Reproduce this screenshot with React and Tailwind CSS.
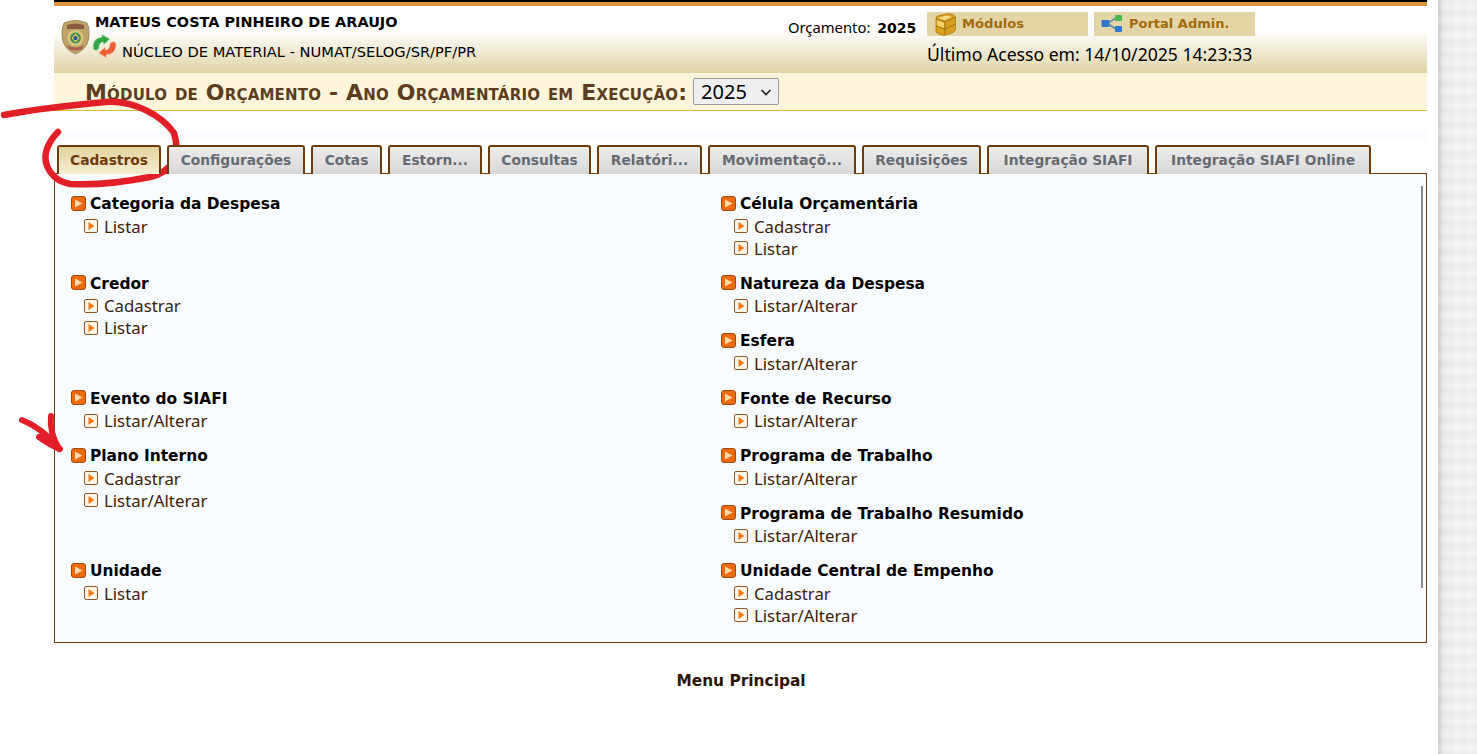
import React from 'react';

const tahoma = 'font-["Noto_Sans",sans-serif]';
const verdana = 'font-["DejaVu_Sans",sans-serif]';

const tabs = [
  { label: 'Cadastros', w: 'w-[104px]', active: true },
  { label: 'Configurações', w: 'w-[138px]' },
  { label: 'Cotas', w: 'w-[71px]' },
  { label: 'Estorn...', w: 'w-[94px]' },
  { label: 'Consultas', w: 'w-[103px]' },
  { label: 'Relatóri...', w: 'w-[105px]' },
  { label: 'Movimentaçõ...', w: 'w-[148px]' },
  { label: 'Requisições', w: 'w-[119px]' },
  { label: 'Integração SIAFI', w: 'w-[162px]' },
  { label: 'Integração SIAFI Online', w: 'w-[216px]' },
];

const leftCol = [
  { title: 'Categoria da Despesa', items: ['Listar'], h: 'h-[79.5px]' },
  { title: 'Credor', items: ['Cadastrar', 'Listar'], h: 'h-[115px]' },
  { title: 'Evento do SIAFI', items: ['Listar/Alterar'], h: 'h-[57.5px]' },
  { title: 'Plano Interno', items: ['Cadastrar', 'Listar/Alterar'], h: 'h-[115px]' },
  { title: 'Unidade', items: ['Listar'], h: 'h-[57.5px]' },
];

const rightCol = [
  { title: 'Célula Orçamentária', items: ['Cadastrar', 'Listar'], h: 'h-[79.5px]' },
  { title: 'Natureza da Despesa', items: ['Listar/Alterar'], h: 'h-[57.5px]' },
  { title: 'Esfera', items: ['Listar/Alterar'], h: 'h-[57.5px]' },
  { title: 'Fonte de Recurso', items: ['Listar/Alterar'], h: 'h-[57.5px]' },
  { title: 'Programa de Trabalho', items: ['Listar/Alterar'], h: 'h-[57.5px]' },
  { title: 'Programa de Trabalho Resumido', items: ['Listar/Alterar'], h: 'h-[57.5px]' },
  { title: 'Unidade Central de Empenho', items: ['Cadastrar', 'Listar/Alterar'], h: 'h-[79.5px]' },
];

const HeadBullet = () => (
  <svg width="15" height="15" viewBox="0 0 15 15" className="shrink-0 -mt-[3px]">
    <rect x="0.5" y="0.5" width="14" height="14" rx="2.5" fill="#ee6a0a" stroke="#9a4a12" />
    <path d="M4 3.5 L11.5 7.5 L4 11.5 Z" fill="#ffd9b0" />
  </svg>
);

const ItemBullet = () => (
  <svg width="14" height="14" viewBox="0 0 14 14" className="shrink-0 -mt-[3px]">
    <rect x="0.5" y="0.5" width="13" height="13" rx="1.5" fill="#fff6e8" stroke="#8f5a2c" />
    <path d="M4.5 3 L10.5 7 L4.5 11 Z" fill="#f57a14" />
  </svg>
);

const Emblem = () => (
  <svg width="29" height="36" viewBox="0 0 29 36" className="shrink-0">
    <path d="M3 4 Q14.5 -1 26 4 Q29 10 27.5 20 Q26 30 14.5 35 Q3 30 1.5 20 Q0 10 3 4 Z" fill="#bda26a" stroke="#a08a58" />
    <path d="M6 6 Q14.5 3 23 6 L23 10 L6 10 Z" fill="#8a5a44" />
    <circle cx="14.5" cy="19" r="8" fill="#d8c878" />
    <circle cx="14.5" cy="19" r="5.4" fill="#3f8a5a" />
    <path d="M14.5 14.5 L18.5 19 L14.5 23.5 L10.5 19 Z" fill="#e6d25a" />
    <circle cx="14.5" cy="19" r="2.2" fill="#2c5aa0" />
    <path d="M6 26 Q14.5 31 23 26 L21 30 Q14.5 33 8 30 Z" fill="#a8604a" />
  </svg>
);

const SwapIcon = () => (
  <svg width="25" height="24" viewBox="0 0 25 24" className="shrink-0">
    <path d="M1 15 Q0 4 10 3 L9.5 0 L18 5 L11.5 11 L11 8 Q7 8.5 7 15 Q4 18 1 15 Z" fill="#35a548" stroke="#d4ecd4" strokeWidth="0.7" />
    <path d="M24 9 Q25 20 14 21 L14.5 24 L6.5 19 L13 13 L13.5 16 Q18 15.5 18 9 Q21 6 24 9 Z" fill="#ef5f32" stroke="#f8cfc0" strokeWidth="0.7" />
  </svg>
);

const BoxIcon = () => (
  <svg width="23" height="23" viewBox="0 0 23 23" className="shrink-0">
    <path d="M2 6 Q2 3 5 2.5 L14 0.8 Q20 1 21.5 4 L21.5 16 Q21 19 18 20 L10 22.5 Q5 22 2 19 Z" fill="#d9a01e" stroke="#a87c14" strokeWidth="0.8" />
    <path d="M2 6 L11 9 L21.5 4 M11 9 L11 22 M2 13 L11 16 L21.5 11" fill="none" stroke="#8f6a12" strokeWidth="0.8" />
    <path d="M3 7 L10 9.5 L10 15 L3 12.5 Z" fill="#f3d06a" />
    <path d="M4 5 L12 2.5 L18 4 L11 7 Z" fill="#f5dc8a" />
  </svg>
);

const NetworkIcon = () => (
  <svg width="22" height="20" viewBox="0 0 22 20" className="shrink-0">
    <path d="M7 9 L15 4 M7 10 L15 15" stroke="#5c8a9c" strokeWidth="1.6" fill="none" />
    <rect x="0.5" y="6" width="8" height="7" rx="1" fill="#2f78d0" />
    <rect x="14" y="1" width="7" height="6" rx="1" fill="#4cb84c" />
    <rect x="14" y="12" width="7" height="6" rx="1" fill="#2f78d0" />
  </svg>
);

const MenuGroup = ({ group }) => (
  <div className={group.h}>
    <div className="flex items-center gap-1 h-6">
      <HeadBullet />
      <span className={`${verdana} font-bold text-[15.45px] text-black whitespace-nowrap`}>{group.title}</span>
    </div>
    {group.items.map((item) => (
      <div key={item} className="flex items-center gap-1.5 h-[22px] pl-[13px]">
        <ItemBullet />
        <span className={`${tahoma} text-[16.8px] -mt-[3px] text-[#3b2208] whitespace-nowrap`}>{item}</span>
      </div>
    ))}
  </div>
);

const Annotations = () => (
  <svg width="200" height="460" viewBox="0 0 200 460" className="absolute left-0 top-0 pointer-events-none">
    <path
      d="M4 115 C40 108 75 105 105 102 C135 100 162 116 174 133 C181 155 172 172 150 177 C120 183 90 185 70 184 C52 181 43 165 46 152 C48 144 53 137 58 132"
      fill="none"
      stroke="#e21e26"
      strokeWidth="6.5"
      strokeLinecap="round"
    />
    <path
      d="M22 420 C35 425 48 435 60 449 M51 416 C50 425 52 437 59 449 M39 437 C46 442 52 446 60 449"
      fill="none"
      stroke="#e21e26"
      strokeWidth="6"
      strokeLinecap="round"
    />
  </svg>
);

export default function App() {
  return (
    <div className="relative flex h-[754px] w-full overflow-hidden bg-white">
      <main className="w-[1438px] shrink-0 pl-[54px] pr-[11px]">
        {/* top bars */}
        <div className="h-[2px] bg-black" />
        <div className="h-1 bg-[#d9983f]" />

        {/* user header */}
        <header className="flex h-[67px] bg-gradient-to-b from-white from-35% to-[#e0d4a6]">
          <div className="flex flex-1 pl-[7px] pt-[13px]">
            <Emblem />
            <div>
              <div className={`${verdana} font-bold text-[14.45px] leading-[6px] pl-[5px] text-black whitespace-nowrap`}>
                MATEUS COSTA PINHEIRO DE ARAUJO
              </div>
              <div className="flex items-end mt-[9px] pl-[2px]">
                <SwapIcon />
                <span className={`${verdana} text-[14.65px] leading-[18px] pl-[5px] -mb-[3px] text-black whitespace-nowrap`}>
                  NÚCLEO DE MATERIAL - NUMAT/SELOG/SR/PF/PR
                </span>
              </div>
            </div>
          </div>
          <div className="w-[639px] pt-[6px]">
            <div className="flex h-6">
              <span className={`${tahoma} text-[14.8px] leading-5 pt-[5px] text-black w-[139px] whitespace-nowrap`}>
                Orçamento: <b className={`${verdana} text-[14px] pl-[3px]`}>2025</b>
              </span>
              <div className="flex items-center gap-[5px] w-[161px] h-6 bg-[#e3d5a5] pl-[7px]">
                <BoxIcon />
                <span className={`${verdana} font-bold text-[13.1px] text-[#a26a0c]`}>Módulos</span>
              </div>
              <div className="flex items-center gap-[6px] w-[161px] h-6 ml-[6px] bg-[#e3d5a5] pl-[7px]">
                <NetworkIcon />
                <span className={`${verdana} font-bold text-[13px] text-[#a26a0c] whitespace-nowrap`}>Portal Admin.</span>
              </div>
            </div>
            <div className={`${tahoma} text-[17.6px] leading-6 mt-[6px] pl-[139px] text-black whitespace-nowrap`}>
              Último Acesso em: 14/10/2025 14:23:33
            </div>
          </div>
        </header>

        {/* module title */}
        <div className="flex items-center h-[38px] pl-[31px] bg-[#fdf5dc] border-b border-[#d9bc3c]">
          <h1 className={`${verdana} font-bold [font-variant:small-caps] text-[22px] tracking-[0.18px] leading-none pt-[3px] text-[#5c3d22] whitespace-nowrap`}>
            Módulo de Orçamento - Ano Orçamentário em Execução:
          </h1>
          <div className={`${tahoma} flex items-center justify-between w-[86px] h-[27px] ml-[6px] pl-[7px] pr-[6px] bg-[#efefef] border border-[#9a9a9a] rounded-[2px] text-[20px] text-black`}>
            2025
            <svg width="12" height="12" viewBox="0 0 12 12">
              <path d="M1.5 4 L6 8.5 L10.5 4" fill="none" stroke="#222" strokeWidth="1.6" />
            </svg>
          </div>
        </div>

        {/* tabs */}
        <div className="h-[9px] mt-5 bg-[#f9fbfe]" />
        <div className="flex gap-[6px] h-[29px] mt-[5px] pl-[3px]">
          {tabs.map((tab) => (
            <div
              key={tab.label}
              className={`${tab.w} ${verdana} relative z-10 flex items-center justify-center h-[29px] shrink-0 rounded-t-[3px] border-[2px] border-b-0 border-[#6e3c0a] font-bold text-[13.8px] whitespace-nowrap ${
                tab.active
                  ? 'bg-gradient-to-b from-[#e3d49d] to-[#f6eed4] text-[#6e3c0a]'
                  : 'bg-gradient-to-b from-[#ececec] to-[#d8d8d8] text-[#666b73] mb-px h-[28px]'
              }`}
            >
              {tab.label}
            </div>
          ))}
        </div>

        {/* menu panel */}
        <section className="relative flex h-[470px] -mt-px pl-4 pt-[18.7px] bg-[#f9fcff] border border-[#6e3c0a]">
          <div className="w-[649px] shrink-0">
            {leftCol.map((group) => (
              <MenuGroup key={group.title} group={group} />
            ))}
          </div>
          <div className="pl-px">
            {rightCol.map((group) => (
              <MenuGroup key={group.title} group={group} />
            ))}
          </div>
          <div className="absolute right-[3px] top-3 w-[2px] h-[402px] bg-[#8a8a8a]" />
        </section>

        <p className={`${verdana} mt-[28px] pl-[1px] text-center font-bold text-[15.4px] leading-5 text-[#2e1503]`}>
          Menu Principal
        </p>
      </main>

      {/* textured page edge */}
      <aside className="flex-1 bg-white bg-[linear-gradient(to_right,#dcdcdc,#f4f4f4_5px,transparent_12px),repeating-linear-gradient(to_bottom,#f3f3f3_0,#fafafa_7px,#f1f1f1_14px),repeating-linear-gradient(to_right,#f5f5f5_0,#fcfcfc_6px,#f5f5f5_13px)] bg-blend-multiply" />

      <Annotations />
    </div>
  );
}
